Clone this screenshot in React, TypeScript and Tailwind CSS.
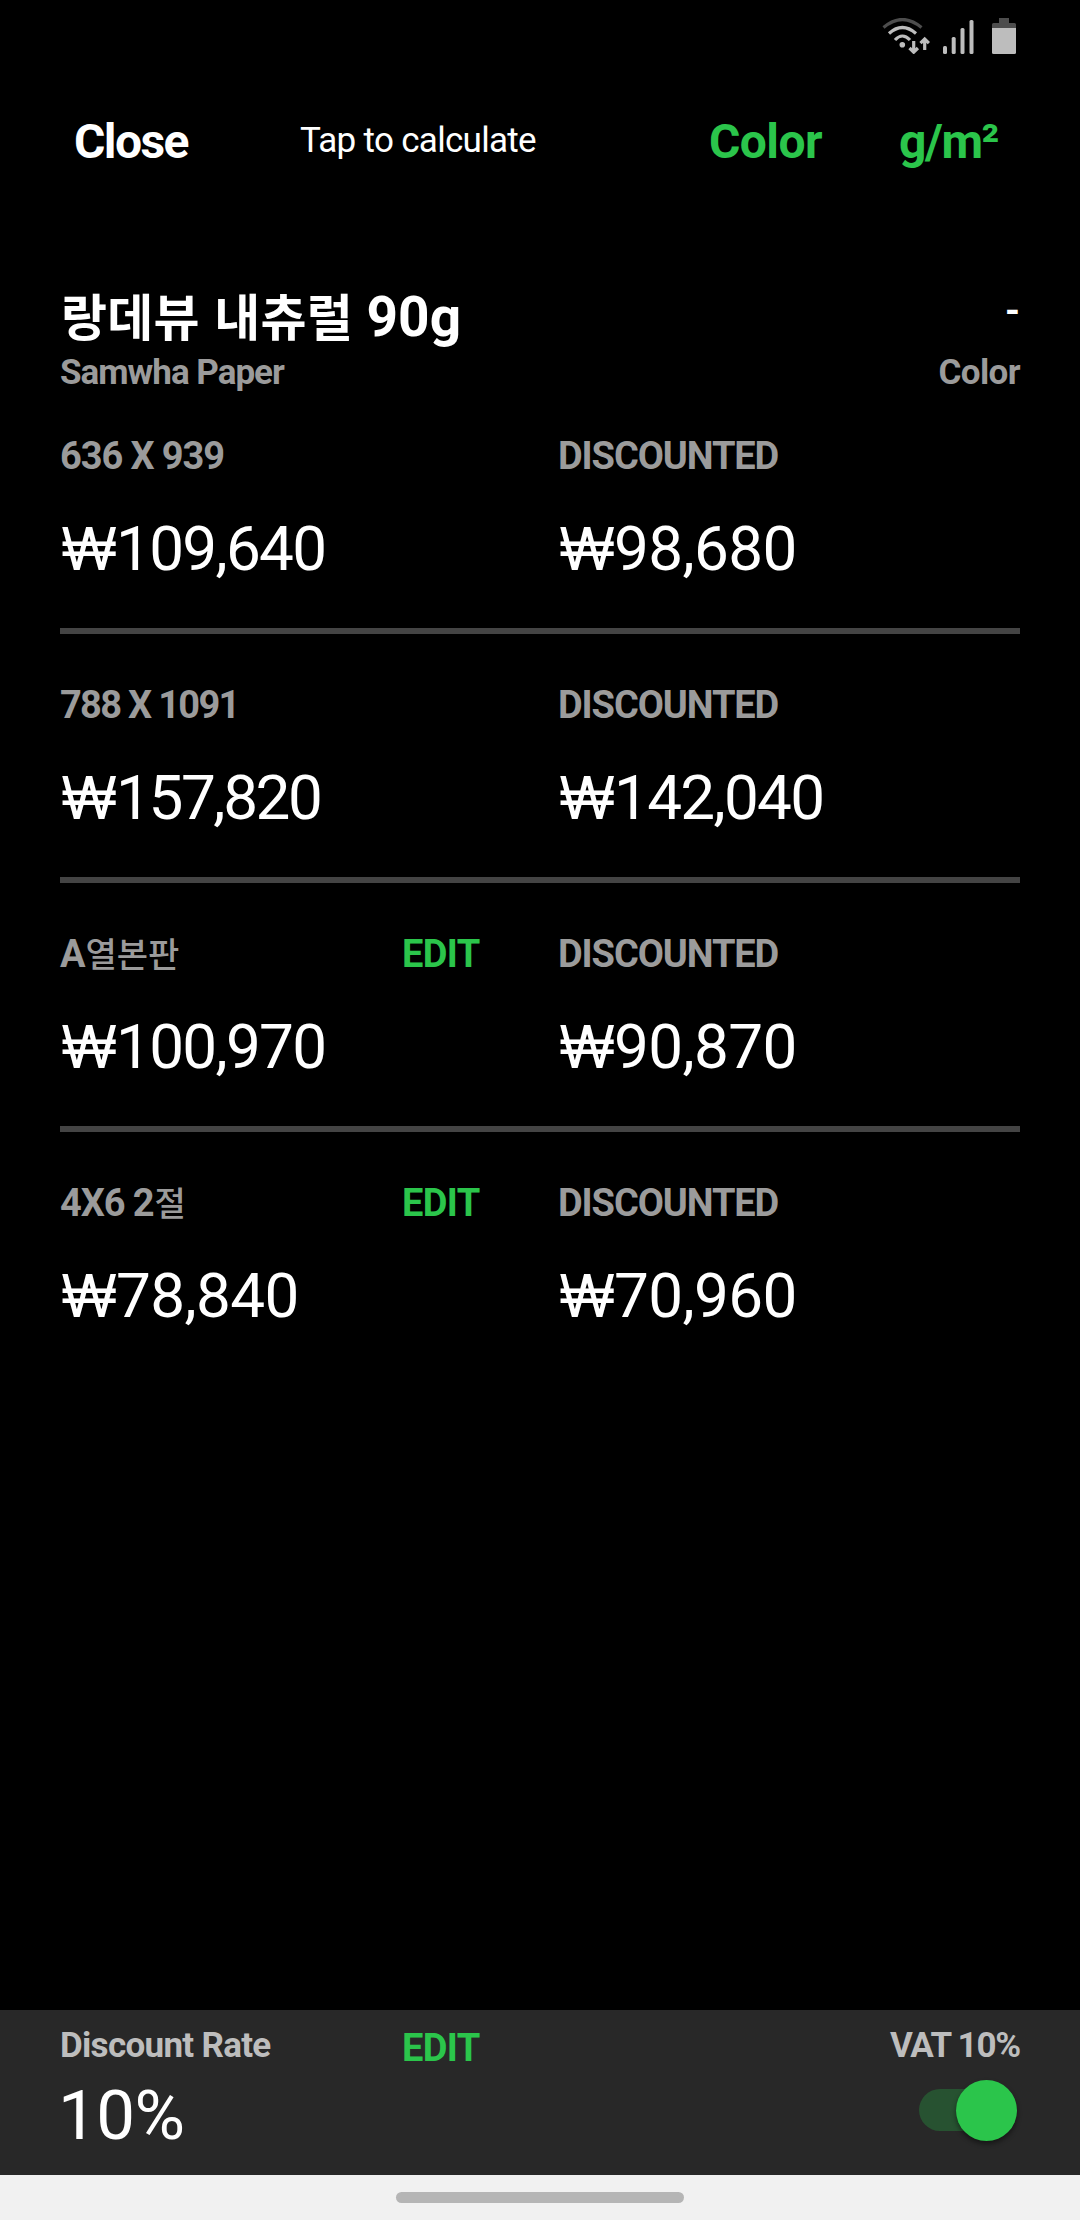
import React, { useState } from 'react';

interface PriceRow {
  size: string;
  price: string;
  discounted: string;
  editable?: boolean;
}

const rows: PriceRow[] = [
  { size: '636 X 939', price: '109,640', discounted: '98,680' },
  { size: '788 X 1091', price: '157,820', discounted: '142,040' },
  { size: 'A열본판', price: '100,970', discounted: '90,870', editable: true },
  { size: '4X6 2절', price: '78,840', discounted: '70,960', editable: true },
];

// Hangul is set in its own face, a little smaller than the latin text
const MixedText: React.FC<{ text: string; hangulClass: string }> = ({ text, hangulClass }) => (
  <>
    {text.split(/([가-힣]+)/).map((part, index) =>
      /[가-힣]/.test(part) ? (
        <span key={index} className={`font-['Noto_Sans_CJK_KR',sans-serif] ${hangulClass}`}>
          {part}
        </span>
      ) : (
        part
      )
    )}
  </>
);

const amountTracking = (value: string) => {
  if (value.startsWith('157')) return 'tracking-[-2.4px]';
  return value.startsWith('1') ? 'tracking-[-1.7px]' : 'tracking-[-0.6px]';
};

const Amount: React.FC<{ value: string }> = ({ value }) => (
  <div className="flex h-[72px] items-baseline text-[62px] leading-[72px] text-white">
    <span className="w-14 shrink-0 pl-px font-['Inter',sans-serif] text-[59px] leading-[72px]">₩</span>
    <span className={amountTracking(value)}>{value}</span>
  </div>
);

const EditButton: React.FC = () => (
  <button className="ml-px text-[38px] leading-10 font-bold tracking-[-0.6px] text-[#2bc54b]">EDIT</button>
);

const StatusBar: React.FC = () => (
  <div className="flex h-[84px] items-start justify-end pt-[18px] pr-16">
    <svg width="48" height="36" viewBox="0 0 48 36" fill="none" strokeWidth="3.2">
      <path d="M1.500 9.500 Q20.300 -6.500 39.500 9.500" stroke="#4d4d4d" />
      <path d="M7 15.500 Q20.300 3.500 34 15.500" stroke="#bdbdbd" />
      <path d="M13 22 Q20.300 14 28 22" stroke="#bdbdbd" />
      <circle cx="20.3" cy="26.7" r="2.8" fill="#bdbdbd" />
      <path d="M31.700 23v11M27.500 30l4.200 4.200 4.200-4.200M42.700 32V21M38.500 25.200l4.200-4.200 4.200 4.200" stroke="#bdbdbd" />
    </svg>
    <svg width="31" height="36" viewBox="0 0 31 36" fill="#bdbdbd" className="ml-[13px]">
      <rect x="0" y="28" width="4" height="8" rx="1.5" />
      <rect x="8.7" y="19" width="4" height="17" rx="1.5" />
      <rect x="17.5" y="10" width="4" height="26" rx="1.5" />
      <rect x="26.5" y="2" width="4" height="34" rx="1.5" />
    </svg>
    <svg width="24" height="36" viewBox="0 0 24 36" className="ml-[18px]">
      <path d="M7 0h10v5h5.500q1.500 0 1.500 1.500V10H0V6.500Q0 5 1.500 5H7z" fill="#4d4d4d" />
      <path d="M0 10h24v24.500q0 1.500-1.500 1.500h-21Q0 36 0 34.500z" fill="#bdbdbd" />
    </svg>
  </div>
);

const App: React.FC = () => {
  const [vat, setVat] = useState(true);

  return (
    <div className="flex h-[2220px] w-[1080px] flex-col overflow-hidden bg-black font-['Roboto',sans-serif] text-white">
      <StatusBar />

      <header className="flex h-[116px] items-center">
        <button className="ml-[74px] w-[226px] text-left text-[48px] font-bold tracking-[-1.6px]">Close</button>
        <span className="flex-1 pb-[2px] text-[35px] tracking-[-0.7px]">Tap to calculate</span>
        <button className="w-[190px] text-left text-[48px] font-bold tracking-[-0.6px] text-[#2bc54b]">Color</button>
        <button className="w-[181px] text-left text-[48px] font-bold tracking-[-1.4px] text-[#2bc54b]">g/m²</button>
      </header>

      <main className="flex-1 px-[60px]">
        <div className="mt-[86px] flex h-[75px] items-start justify-between">
          <h1 className="text-[55px] leading-[62px] font-bold">
            <MixedText text="랑데뷰 내츄럴 90g" hangulClass="pl-px text-[50px] leading-none tracking-[0.2px]" />
          </h1>
          <span className="pt-[5px] text-[38px] leading-10 font-bold">-</span>
        </div>
        <div className="flex h-6 items-center justify-between text-[35px] leading-6 font-bold text-[#9b9b9b]">
          <span className="tracking-[-1px]">Samwha Paper</span>
          <span className="tracking-[-0.6px]">Color</span>
        </div>

        {rows.map((row, index) => (
          <div
            key={row.size}
            className={`flex h-[249px] pt-[51px] ${index < rows.length - 1 ? 'border-b-[6px] border-[#444]' : ''}`}
          >
            <div className="flex w-[498px] flex-col gap-[37px]">
              <div className="flex h-10 text-[38px] leading-10 font-bold text-[#9b9b9b]">
                <span className={`w-[341px] ${row.size.length > 9 ? 'tracking-[-1.7px]' : 'tracking-[-1.1px]'}`}>
                  <MixedText text={row.size} hangulClass="pl-px text-[34px] leading-none font-medium tracking-normal" />
                </span>
                {row.editable && <EditButton />}
              </div>
              <Amount value={row.price} />
            </div>
            <div className="flex flex-col gap-[37px]">
              <span className="text-[38px] leading-10 font-bold tracking-[-1.1px] text-[#9b9b9b]">DISCOUNTED</span>
              <Amount value={row.discounted} />
            </div>
          </div>
        ))}
      </main>

      <footer className="flex h-[165px] bg-[#282828] px-[60px]">
        <div className="w-[341px] pt-4">
          <div className="text-[35px] leading-10 font-bold tracking-[-0.7px] text-[#bdbdbd]">Discount Rate</div>
          <div className="mt-[10px] -ml-[2px] text-[69px] leading-[80px] tracking-[-0.5px]">10%</div>
        </div>
        <div className="pt-[18px]">
          <EditButton />
        </div>
        <div className="ml-auto flex flex-col items-end pt-4">
          <span className="text-[35px] leading-10 font-bold tracking-[-1.2px] text-[#bdbdbd]">VAT 10%</span>
          <button
            role="switch"
            aria-checked={vat}
            onClick={() => setVat(!vat)}
            className={`mt-[23px] mr-[3px] flex h-[42px] w-[98px] items-center rounded-full ${
              vat ? 'justify-end bg-[#275231]' : 'justify-start bg-[#555]'
            }`}
          >
            <span className="size-[61px] shrink-0 rounded-full bg-[#2bc54b] shadow-[0_3px_5px_rgba(0,0,0,0.45)]" />
          </button>
        </div>
      </footer>

      <div className="flex h-[45px] justify-center bg-[#f1f1f1] pt-[17px]">
        <div className="h-[11px] w-[288px] rounded-full bg-[#b5b5b5]" />
      </div>
    </div>
  );
};

export default App;
